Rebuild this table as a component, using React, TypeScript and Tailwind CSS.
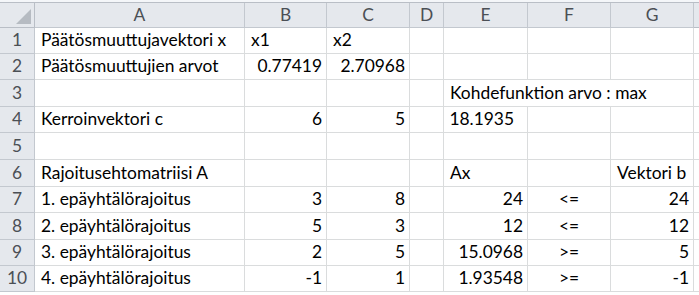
import React from "react";

type Cell = { t?: string; align?: "l" | "r" | "c"; span?: number; pr?: number };

const COLS = ["A", "B", "C", "D", "E", "F", "G"];
const ROW_H = [26, 26, 27, 26, 27, 27, 26, 27, 26, 26];

const L = (t: string): Cell => ({ t, align: "l" });
const R = (t: string): Cell => ({ t, align: "r" });
const C = (t: string): Cell => ({ t, align: "c" });
const E: Cell = {};

const rows: Cell[][] = [
  [L("Päätösmuuttujavektori x"), L("x1"), L("x2"), E, E, E, E],
  [L("Päätösmuuttujien arvot"), R("0.77419"), R("2.70968"), E, E, E, E],
  [E, E, E, E, { t: "Kohdefunktion arvo : max", align: "l", span: 3 }],
  [L("Kerroinvektori c"), R("6"), R("5"), E, { t: "18.1935", align: "r", pr: 13 }, E, E],
  [E, E, E, E, E, E, E],
  [L("Rajoitusehtomatriisi A"), E, E, E, L("Ax"), E, L("Vektori b")],
  [L("1. epäyhtälörajoitus"), R("3"), R("8"), E, R("24"), C("<="), R("24")],
  [L("2. epäyhtälörajoitus"), R("5"), R("3"), E, R("12"), C("<="), R("12")],
  [L("3. epäyhtälörajoitus"), R("2"), R("5"), E, R("15.0968"), C(">="), R("5")],
  [L("4. epäyhtälörajoitus"), R("-1"), R("1"), E, R("1.93548"), C(">="), R("-1")],
];

const font = { fontFamily: "Lato, 'Open Sans', 'Liberation Sans', sans-serif" };

export default function App() {
  return (
    <div
      className="w-[699px] h-[295px] overflow-hidden bg-white text-[17.4px] text-black"
      style={font}
    >
      {/* strip above the column headers */}
      <div className="h-[3px] bg-[#f4f6f9] border-b border-[#b9bec6]" />
      <div className="grid grid-cols-[35px_210px_82px_83px_34px_84px_83px_83px_1fr]">
        {/* select-all corner */}
        <div className="h-[25px] bg-[#e5e8ed] border-r border-b border-[#b9bec6] relative">
          <svg className="absolute right-[3px] bottom-[3px]" width="15" height="15" viewBox="0 0 15 15">
            <polygon points="15,0 15,15 0,15" fill="#b6bbc2" />
          </svg>
        </div>
        {COLS.map((c) => (
          <div
            key={c}
            className="h-[25px] bg-[#e5e8ed] border-r border-b border-[#c3c8cf] flex items-center justify-center text-[#4b4f55]"
          >
            {c}
          </div>
        ))}
        <div className="h-[25px] bg-[#e5e8ed] border-b border-[#b9bec6]" />

        {rows.map((row, ri) => (
          <React.Fragment key={ri}>
            <div
              className="bg-[#e5e8ed] border-r border-b border-[#c3c8cf] flex items-center justify-center text-[#4b4f55]"
              style={{ height: ROW_H[ri] }}
            >
              {ri + 1}
            </div>
            {row.map((cell, ci) => {
              if (ri === 2 && (ci === 5 || ci === 6)) return null;
              const align =
                cell.align === "r"
                  ? "justify-end pr-[4px]"
                  : cell.align === "c"
                  ? "justify-center"
                  : "justify-start pl-[6px]";
              return (
                <div
                  key={ci}
                  className={`flex items-center whitespace-nowrap border-r border-b border-[#dadcdd] ${align} ${
                    cell.span === 3 ? "col-span-3" : ""
                  }`}
                  style={{
                    height: ROW_H[ri],
                    paddingRight: cell.pr,
                  }}
                >
                  {cell.t}
                </div>
              );
            })}
            <div className="border-b border-[#dadcdd]" style={{ height: ROW_H[ri] }} />
          </React.Fragment>
        ))}
      </div>
    </div>
  );
}
